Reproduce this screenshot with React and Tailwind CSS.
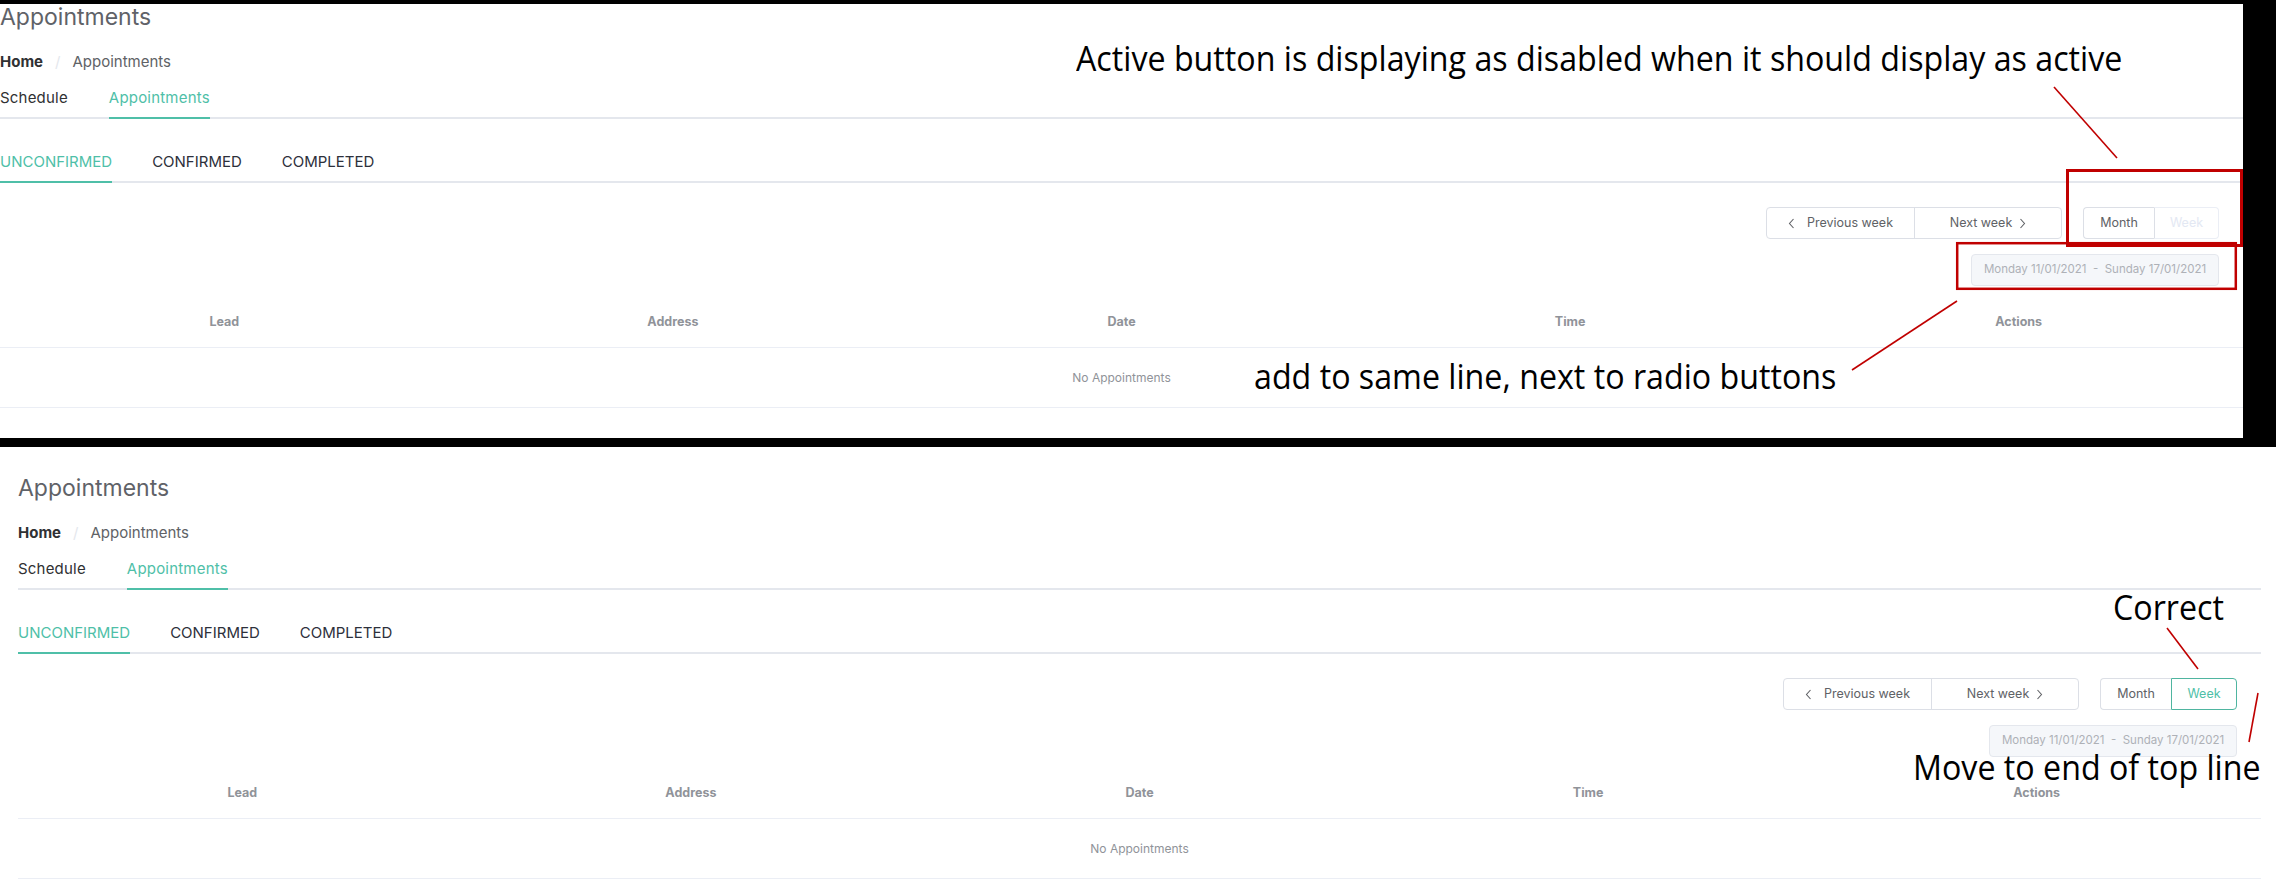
import React from 'react'

function Chevron({ dir }) {
  return (
    <svg width="7" height="11" viewBox="0 0 7 11" fill="none">
      <path
        d={dir === 'left' ? 'M5.5 1L1.5 5.5L5.5 10' : 'M1.5 1L5.5 5.5L1.5 10'}
        stroke="#606266"
        strokeWidth="1.1"
      />
    </svg>
  )
}

const columns = ['Lead', 'Address', 'Date', 'Time', 'Actions']

function AppointmentsView({ weekActive }) {
  return (
    <div className="w-[2243px] pt-[25px] font-['Inter',sans-serif]">
      <h1 className="text-[23px] leading-[32px] font-normal text-[#5f6268]">Appointments</h1>

      <div className="mt-[19px] flex h-[20px] items-center text-[15px] leading-[20px]">
        <span className="font-bold text-[#303133]">Home</span>
        <span className="mx-[12px] text-[#e4e7ed]">/</span>
        <span className="text-[#606266]">Appointments</span>
      </div>

      <div className="mt-[7px] flex h-[40px] border-b-2 border-[#e4e7ed] text-[15px] leading-[38px] tracking-[0.2px]">
        <div className="text-[#303133]">Schedule</div>
        <div className="ml-[41px] -mb-[2px] border-b-2 border-[#4fbfa8] text-[#4fbfa8]">Appointments</div>
      </div>

      <div className="mt-[24px] flex h-[40px] border-b-2 border-[#e4e7ed] text-[15px] uppercase leading-[38px]">
        <div className="-mb-[2px] border-b-2 border-[#4fbfa8] text-[#4fbfa8]">Unconfirmed</div>
        <div className="ml-[40px] text-[#2d303b]">Confirmed</div>
        <div className="ml-[40px] text-[#2d303b]">Completed</div>
      </div>

      <div className="mt-[24px] flex flex-col items-end pr-[24px]">
        <div className="flex items-center gap-[21px]">
          <div className="flex h-[32px] rounded-[4px] border border-[#dcdfe6] text-[12.5px] text-[#606266]">
            <button className="flex w-[147px] items-center justify-center gap-[12px]">
              <Chevron dir="left" />
              Previous week
            </button>
            <button className="flex w-[147px] items-center justify-center gap-[7px] border-l border-[#dcdfe6]">
              Next week
              <Chevron dir="right" />
            </button>
          </div>
          <div className="flex h-[32px] text-[12.5px]">
            <button className="w-[71px] rounded-l-[4px] border border-r-0 border-[#dcdfe6] text-[#606266]">Month</button>
            {weekActive ? (
              <button className="w-[66px] rounded-r-[4px] border border-[#4fb5a0] text-[#4fbfa8]">Week</button>
            ) : (
              <button className="w-[65px] rounded-r-[4px] border border-[#ebeef5] border-l-[#dcdfe6] text-[#e3e8f3]">Week</button>
            )}
          </div>
        </div>
        <div className="mt-[15px] flex h-[32px] w-[248px] items-center justify-center whitespace-nowrap rounded-[4px] border border-[#e4e7ed] bg-[#f5f7fa] text-[11.5px] text-[#aeb1b7]">
          Monday 11/01/2021&nbsp;&nbsp;-&nbsp;&nbsp;Sunday 17/01/2021
        </div>
      </div>

      <div className="mt-[12px]">
        <div className="grid h-[50px] grid-cols-5 items-center border-b border-[#ebeef5] text-center text-[12.5px] font-bold text-[#909399]">
          {columns.map(c => (
            <div key={c}>{c}</div>
          ))}
        </div>
        <div className="flex h-[60px] items-center justify-center border-b border-[#ebeef5] text-[12px] text-[#909399]">
          No Appointments
        </div>
      </div>
    </div>
  )
}

function Note({ className, children }) {
  return (
    <div
      className={`absolute origin-left scale-x-[0.92] whitespace-nowrap font-['Open_Sans',sans-serif] text-[35px] leading-none text-black ${className}`}
    >
      {children}
    </div>
  )
}

export default function App() {
  return (
    <div className="relative h-[893px] w-[2276px] overflow-hidden bg-white">
      {/* the "before" screenshot, framed in black */}
      <div className="h-[447px] bg-black pt-[4px]">
        <div className="h-[434px] w-[2243px] overflow-hidden bg-white">
          <div className="-mt-[28px]">
            <AppointmentsView />
          </div>
        </div>
      </div>

      {/* the "after" screenshot */}
      <div className="pl-[18px]">
        <AppointmentsView weekActive />
      </div>

      {/* review markup */}
      <Note className="left-[1076px] top-[40px]">Active button is displaying as disabled when it should display as active</Note>
      <Note className="left-[1254px] top-[358px]">add to same line, next to radio buttons</Note>
      <Note className="left-[2113px] top-[589px]">Correct</Note>
      <Note className="left-[1913px] top-[749px]">Move to end of top line</Note>

      <svg className="pointer-events-none absolute left-0 top-0" width="2276" height="893" fill="none">
        <rect x="2067.5" y="170.5" width="174" height="75" stroke="#c00000" strokeWidth="3" />
        <rect x="1957.2" y="243.2" width="278.6" height="45.6" stroke="#c00000" strokeWidth="2.5" />
        <line x1="2054" y1="87" x2="2117" y2="158" stroke="#c00000" strokeWidth="1.6" />
        <line x1="1957" y1="301" x2="1852" y2="370" stroke="#c00000" strokeWidth="1.6" />
        <line x1="2167" y1="628" x2="2198" y2="669" stroke="#c00000" strokeWidth="1.6" />
        <line x1="2258" y1="693" x2="2249" y2="742" stroke="#c00000" strokeWidth="1.6" />
      </svg>
    </div>
  )
}
